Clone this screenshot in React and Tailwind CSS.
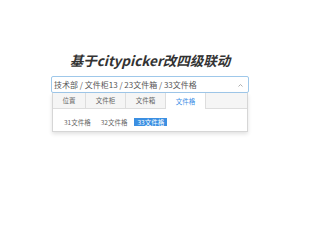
import React from 'react';

const tabs = [
  { label: '位置', w: 'w-[33px]' },
  { label: '文件柜', w: 'w-[40px]' },
  { label: '文件箱', w: 'w-[40px]' },
  { label: '文件格', w: 'w-[40px]', active: true },
];

const items = [
  { label: '31文件格' },
  { label: '32文件格' },
  { label: '33文件格', active: true },
];

const App = () => {
  return (
    <div
      className="w-[300px] h-[200px] bg-white overflow-hidden"
      style={{ fontFamily: '"Noto Sans CJK SC", "Liberation Sans", sans-serif' }}
    >
      {/* title */}
      <h1 className="pt-[51px] text-center text-[13.5px] leading-[18px] font-bold italic text-[#333]">
        基于citypicker改四级联动
      </h1>

      <div className="mt-[7px] mx-auto w-[198px]">
        {/* input */}
        <div className="h-[17px] border border-[#9fc8ea] rounded-[2px] flex items-center pl-[2px] pr-[5px] bg-white">
          <span className="flex-1 text-[8px] leading-none text-[#555] whitespace-nowrap">
            技术部 / 文件柜13 / 23文件箱 / 33文件格
          </span>
          <svg width="5" height="3" viewBox="0 0 5 3" className="mt-[1px]">
            <polyline points="0.5,2.5 2.5,0.5 4.5,2.5" fill="none" stroke="#999" strokeWidth="0.8" />
          </svg>
        </div>

        {/* dropdown */}
        <div className="mx-px bg-white border border-t-0 border-[#d6d6d6] shadow-[0_2px_4px_rgba(0,0,0,0.12)]">
          <div className="flex h-[16px] bg-[#f5f5f5]">
            {tabs.map((t) => (
              <div
                key={t.label}
                className={
                  t.active
                    ? `${t.w} flex items-center justify-center text-[6.5px] leading-none text-[#3a8ee6] bg-white border-r border-[#ddd]`
                    : `${t.w} flex items-center justify-center text-[6.5px] leading-none text-[#666] border-r border-b border-[#ddd]`
                }
              >
                {t.label}
              </div>
            ))}
            <div className="flex-1 border-b border-[#ddd]"></div>
          </div>
          <div className="h-[22px] flex items-center gap-[4px] pl-[8px] pt-[4px]">
            {items.map((it) => (
              <span
                key={it.label}
                className={
                  it.active
                    ? 'px-[3px] h-[8px] flex items-center text-[6.5px] leading-none bg-[#3b8fe2] text-white'
                    : 'px-[3px] h-[8px] flex items-center text-[6.5px] leading-none text-[#666]'
                }
              >
                {it.label}
              </span>
            ))}
          </div>
        </div>
      </div>
    </div>
  );
};

export default App;
